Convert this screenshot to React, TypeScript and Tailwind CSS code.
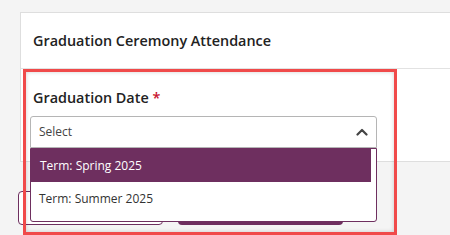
import React from "react";

export default function App() {
  return (
    <div className="relative w-[450px] h-[235px] overflow-hidden bg-[#f4f4f4] font-['Open_Sans',sans-serif] text-[#222]">
      <div className="ml-[20px] mt-[12px] h-[150px] border border-r-0 border-[#dedede] bg-white">
        <div className="flex h-[56px] items-center border-b border-[#e2e2e2] pl-[12px] text-[14.4px] font-semibold">
          Graduation Ceremony Attendance
        </div>
        <div className="pl-[9px] pt-[19px]">
          <div className="pl-[3px] text-[14.4px] font-semibold leading-[20px]">
            Graduation Date <span className="text-[#c8102e]">*</span>
          </div>
          <div className="relative mt-[8px] w-[347px]">
            <div className="flex h-[32px] items-center justify-between rounded-t-[3px] border border-[#b5b5b5] bg-white pl-[8px] pr-[8px] text-[12px] text-[#444]">
              <span>Select</span>
              <svg width="12" height="8" viewBox="0 0 12 8" fill="none">
                <path d="M1.5 6.5 L6 2 L10.5 6.5" stroke="#444" strokeWidth="2.2" strokeLinecap="round" strokeLinejoin="round" />
              </svg>
            </div>
            <div className="absolute left-0 top-full z-10 w-[347px] rounded-b-[3px] border border-[#6e2f5f] bg-white pb-[5px] pr-[5px] text-[12px]">
              <div className="flex h-[33px] items-center bg-[#6e2f5f] pl-[9px] text-white">Term: Spring 2025</div>
              <div className="flex h-[34px] items-center pl-[8px] text-[#333]">Term: Summer 2025</div>
            </div>
          </div>
        </div>
      </div>
      <div className="ml-[18px] mt-[29px] flex gap-[15px]">
        <div className="h-[34px] w-[145px] rounded-[4px] border border-[#6e2f5f] bg-white"></div>
        <div className="h-[34px] w-[165px] rounded-[4px] bg-[#6e2f5f]"></div>
      </div>
      <div className="pointer-events-none absolute left-[23px] top-[69px] z-20 h-[166px] w-[374px] border-[3px] border-[#f04a4a] shadow-[inset_0_0_4px_rgba(0,0,0,0.18)]"></div>
    </div>
  );
}
